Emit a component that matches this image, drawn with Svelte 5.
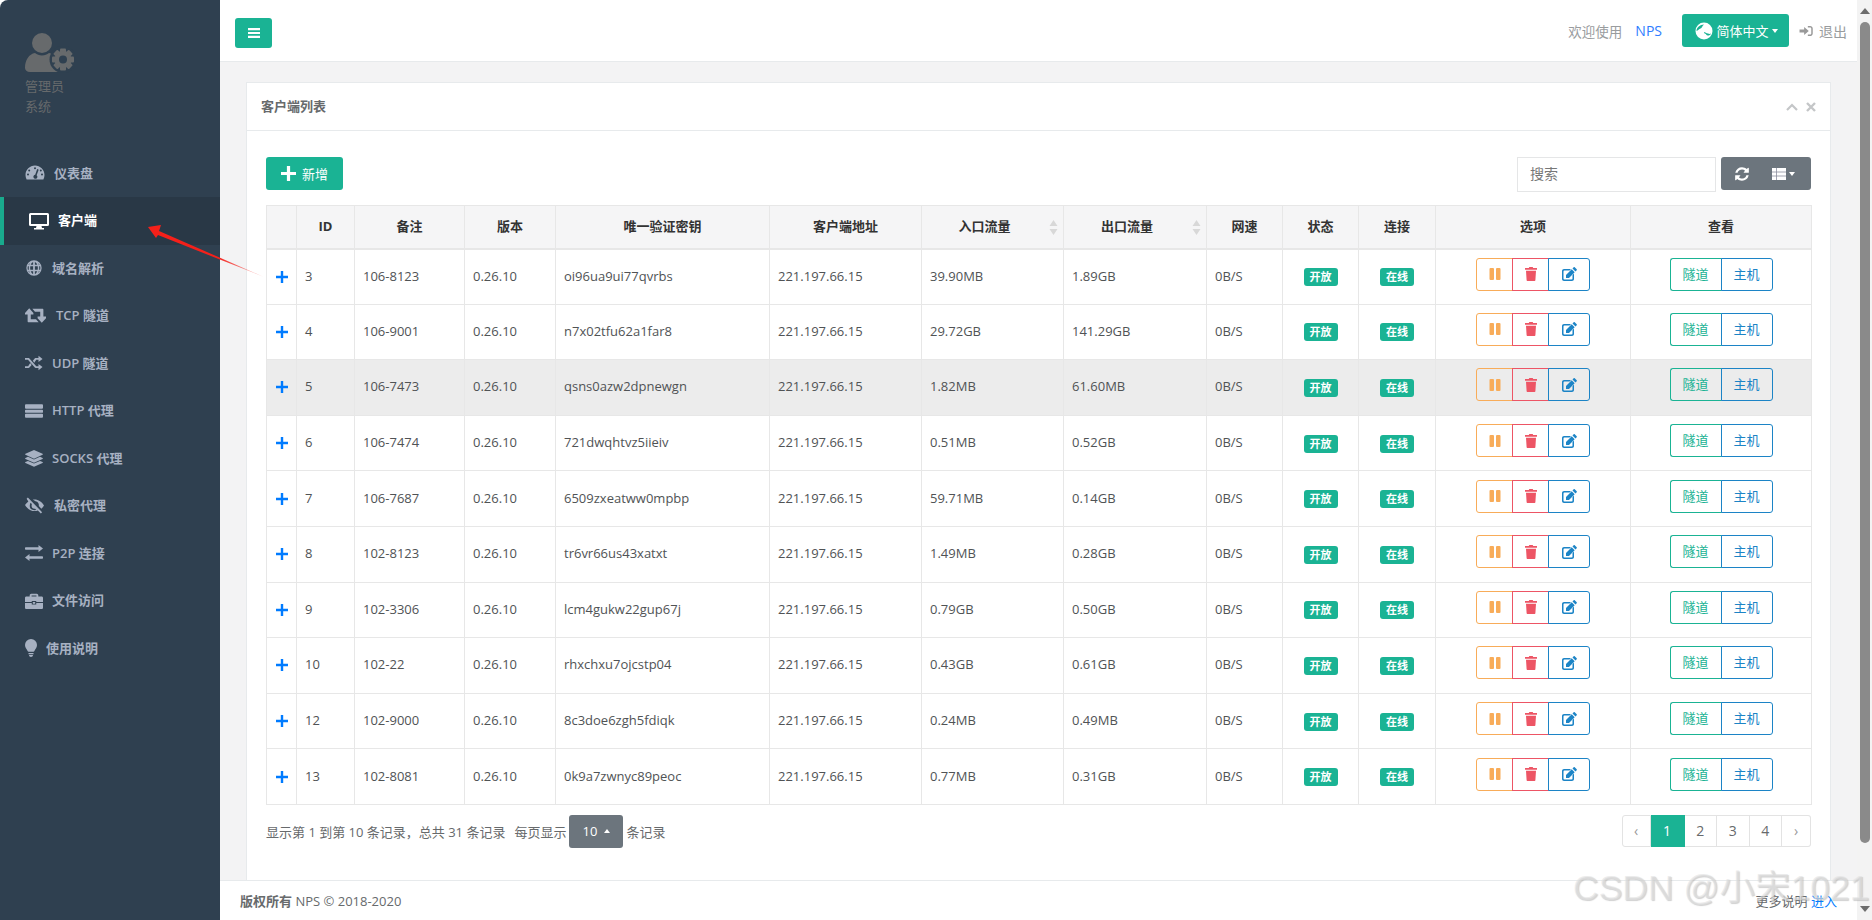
<script>
  const rows = [
    [3, '106-8123', 'oi96ua9ui77qvrbs', '39.90MB', '1.89GB'],
    [4, '106-9001', 'n7x02tfu62a1far8', '29.72GB', '141.29GB'],
    [5, '106-7473', 'qsns0azw2dpnewgn', '1.82MB', '61.60MB'],
    [6, '106-7474', '721dwqhtvz5iieiv', '0.51MB', '0.52GB'],
    [7, '106-7687', '6509zxeatww0mpbp', '59.71MB', '0.14GB'],
    [8, '102-8123', 'tr6vr66us43xatxt', '1.49MB', '0.28GB'],
    [9, '102-3306', 'lcm4gukw22gup67j', '0.79GB', '0.50GB'],
    [10, '102-22', 'rhxchxu7ojcstp04', '0.43GB', '0.61GB'],
    [12, '102-9000', '8c3doe6zgh5fdiqk', '0.24MB', '0.49MB'],
    [13, '102-8081', '0k9a7zwnyc89peoc', '0.77MB', '0.31GB']
  ];
  const menu = [
    { label: '仪表盘', icon: 'gauge', w: 20, gap: 9 },
    { label: '客户端', icon: 'desktop', w: 20, gap: 9, active: true },
    { label: '域名解析', icon: 'globe', w: 18, gap: 9 },
    { label: 'TCP 隧道', icon: 'retweet', w: 21, gap: 10 },
    { label: 'UDP 隧道', icon: 'random', w: 18, gap: 9 },
    { label: 'HTTP 代理', icon: 'server', w: 18, gap: 9 },
    { label: 'SOCKS 代理', icon: 'layers', w: 18, gap: 9 },
    { label: '私密代理', icon: 'eyeoff', w: 19, gap: 10 },
    { label: 'P2P 连接', icon: 'exchange', w: 18, gap: 9 },
    { label: '文件访问', icon: 'case', w: 18, gap: 9 },
    { label: '使用说明', icon: 'bulb', w: 12, gap: 9 }
  ];
  const paths = {
    gauge: 'M10 2.500C4.700 2.500.5 6.800.5 12c0 1.600.4 3.100 1.100 4.500h16.800c.7-1.400 1.100-2.900 1.100-4.500 0-5.200-4.300-9.500-9.500-9.500zM10 4.200a1 1 0 110 2 1 1 0 010-2zM4.200 6.600a1 1 0 110 2 1 1 0 010-2zM3 12.600a1 1 0 110-2 1 1 0 010 2zm10.500-5.400l-1.900 5a2 2 0 11-1.400-.4l1.800-5.200a.8.8 0 011.500.6zm3.500 5.400a1 1 0 110-2 1 1 0 010 2zm-1.200-4a1 1 0 110-2 1 1 0 010 2z',
    desktop: 'M1.500 2h17A1.500 1.500 0 0120 3.500v10a1.500 1.500 0 01-1.500 1.500H12.500l.5 2h2v1.500H5V17h2l.5-2h-6A1.500 1.500 0 010 13.500v-10A1.500 1.500 0 011.500 2zM2 4v9h16V4z',
    globe: 'M10 1.500a8.500 8.500 0 100 17 8.500 8.500 0 000-17zM9 3.300V6.500H6.400C7 4.900 7.900 3.700 9 3.300zm2 0c1.100.4 2 1.600 2.600 3.200H11zM4.700 4.900l.5.300c-.2.400-.4.800-.6 1.300H3.800c.3-.6.600-1.100.9-1.600zm10.600 0c.3.500.6 1 .9 1.600h-.8c-.2-.5-.4-.9-.6-1.300zM3.200 8h1.100c-.1.600-.1 1.300-.1 2s0 1.400.1 2H3.200a7 7 0 010-4zm2.700 0H9v4H5.900a13 13 0 010-4zM11 8h3.100a13 13 0 010 4H11zm4.700 0h1.100a7 7 0 010 4h-1.100c.1-.6.1-1.300.1-2s0-1.400-.1-2zM3.800 13.500h.8c.2.500.4.900.6 1.300l-.5.300c-.3-.5-.6-1-.9-1.600zm2.600 0H9v3.200c-1.100-.4-2-1.600-2.600-3.200zm4.600 0h2.600c-.6 1.600-1.500 2.800-2.600 3.200zm4.400 0h.8c-.3.600-.6 1.100-.9 1.600l-.5-.3c.2-.4.400-.8.600-1.300z',
    retweet: 'M4 3L0 7.500V9h2.500v6.500c0 .6.400 1 1 1H13l-2.500-3H5.500V9H8V7.500zM7 3.500l2.500 3h5V11H12v1.500l4 4.500 4-4.500V11h-2.500V4.500c0-.6-.4-1-1-1z',
    random: 'M15 2l4.500 3.500L15 9V6.500h-2.500L10.300 9.700 8.700 7.500 11 4.800c.3-.2.600-.3.900-.3H15zM0 4.500h4c.3 0 .6.100.9.400L12.500 13.500H15V11l4.500 3.500L15 18v-2.500h-3.200c-.3 0-.6-.1-.9-.4L3.300 6.500H0zM5.800 10.100l1.600 2.200-2.500 2.800c-.2.300-.6.400-.9.400H0v-2h3.500z',
    server: 'M1 2.500h18c.6 0 1 .4 1 1v3c0 .6-.4 1-1 1H1c-.6 0-1-.4-1-1v-3c0-.6.4-1 1-1zM1 8.500h18c.6 0 1 .4 1 1v1.500c0 .6-.4 1-1 1H1c-.6 0-1-.4-1-1V9.500c0-.6.4-1 1-1zM1 13h18c.6 0 1 .4 1 1v2.500c0 .6-.4 1-1 1H1c-.6 0-1-.4-1-1V14c0-.6.4-1 1-1z',
    layers: 'M10 1l9.500 4.300c.5.200.5.900 0 1.100L10 10.700.5 6.400c-.5-.2-.5-.9 0-1.100zM3.300 8.600l6.700 3 6.700-3 2.800 1.300c.5.200.5.900 0 1.100L10 15.300.5 11c-.5-.2-.5-.9 0-1.100zM3.300 13.200l6.700 3 6.700-3 2.800 1.300c.5.200.5.900 0 1.100L10 19.800.5 15.600c-.5-.2-.5-.9 0-1.100z',
    eyeoff: 'M3 1.500l15 15.500-1.300 1.500-3.200-3.300c-1.100.4-2.300.7-3.500.7-4.200 0-7.800-2.500-10-6.300.9-1.500 2.100-2.900 3.500-3.900L1.700 3zM10 3.700c4.200 0 7.800 2.500 10 6.200-.7 1.300-1.700 2.500-2.800 3.400l-2.700-2.800c.3-1.900-.3-3.500-1.800-4.500-.6-.3-1.200-.5-1.700-.5L8.200 3.800c.6-.1 1.200-.1 1.800-.1zM5.800 7l1.400 1.500-.3 1.800c0 1.800 1.400 3.200 3.100 3.200l.6-.1 1.300 1.300-1.900.2c-3 0-5-1.800-5-4.500 0-1 .3-2.100.8-3.400z',
    exchange: 'M15 1l5 4-5 4V6.500H1c-.5 0-1-.5-1-1v-1c0-.5.500-1 1-1h14zM5 11v2.500h14c.5 0 1 .5 1 1v1c0 .5-.5 1-1 1H5V19l-5-4z',
    case: 'M7 2h6c1 0 1.800.8 1.800 1.800V5h3.700C19.300 5 20 5.700 20 6.500V11h-7.500v-1h-5v1H0V6.500C0 5.700.7 5 1.500 5h3.700V3.800C5.200 2.800 6 2 7 2zm.3 1.800V5h5.400V3.800zM0 12.200h7.500v1.800h5v-1.800H20v5.300c0 .8-.7 1.500-1.500 1.500h-17C.7 19 0 18.300 0 17.500zM8.700 11h2.600v2H8.700z',
    bulb: 'M6 0a6 6 0 00-6 6c0 2.800 1.700 3.800 2.600 6 .2.500.5.800 1 .8h4.800c.5 0 .8-.3 1-.8.9-2.200 2.600-3.200 2.600-6a6 6 0 00-6-6zM3.500 14h5v1.200h-5zM4 16h4c0 1.300-.9 2-2 2s-2-.7-2-2z'
  };
  const teeth = [0, 45, 90, 135];
</script>

<div class="shell">
  <aside class="side">
    <div class="profile">
      <svg class="admin" viewBox="0 0 50 40" aria-hidden="true">
        <circle cx="17" cy="10" r="10" fill="#676a6c"/>
        <path d="M0 35c0-8 4-14 10-15 2 1.500 4 2.500 7 2.500s5-1 7-2.500c5 .7 8 4 9 10v9H5c-3 0-5-2-5-4z" fill="#676a6c"/>
        <circle cx="38" cy="26.500" r="13.500" fill="#2f4050"/>
        <g fill="#676a6c">
          {#each teeth as t}
            <rect x="35" y="15.500" width="6" height="22" rx="1" transform="rotate({t} 38 26.500)"/>
          {/each}
          <circle cx="38" cy="26.500" r="8.500"/>
        </g>
        <circle cx="38" cy="26.500" r="4" fill="#2f4050"/>
      </svg>
      <div class="ptext">管理员</div>
      <div class="ptext">系统</div>
    </div>
    <nav class="menu">
      {#each menu as m}
        <div class="item" class:active={m.active} style:gap="{m.gap}px">
          {#if m.icon === 'bulb'}
            <svg class="mi" style:width="{m.w}px" viewBox="0 0 12 18" aria-hidden="true"><path d={paths.bulb}/></svg>
          {:else}
            <svg class="mi" style:width="{m.w}px" style:height="{m.w}px" viewBox="0 0 20 20" aria-hidden="true"><path fill-rule="evenodd" d={paths[m.icon]}/></svg>
          {/if}
          <span>{m.label}</span>
        </div>
      {/each}
    </nav>
  </aside>

  <div class="main">
    <header class="top">
      <button class="burger" aria-label="菜单">
        <svg viewBox="0 0 12 12" width="12" height="12"><path d="M0 1h12v2.200H0zM0 4.900h12v2.200H0zM0 8.800h12V11H0z" fill="#fff"/></svg>
      </button>
      <div class="topright">
        <span class="welcome">欢迎使用</span>
        <span class="nps">NPS</span>
        <button class="lang">
          <svg viewBox="0 0 18 18" width="18" height="18"><circle cx="9" cy="9" r="8.500" fill="#fff"/><path d="M1.500 9c1.500-.5 2.500-2 4-2.500C7 6 7 4 9 2.500c-4 0-7.500 3-7.500 6.500zM9 10c1.500 0 2 1.500 4 1.500 1 .5 2 .5 3 0-.5 1-1 1.500-2 2-1.500 0-3-.5-3-1.500-1 0-2-1-2-2z" fill="#1ab394"/></svg>
          简体中文<i class="caret"></i>
        </button>
        <span class="logout">
          <svg viewBox="0 0 15 13" width="14" height="12"><path d="M9.500 1h2.500c1.500 0 2.800 1.200 2.800 2.800v5.400c0 1.600-1.300 2.800-2.800 2.800H9.500v-1.600H12c.7 0 1.200-.5 1.200-1.200V3.800c0-.7-.5-1.200-1.200-1.200H9.500zM5.500 2.200l5 4.300-5 4.300V8.200H.5V4.800h5z" fill="#999"/></svg>
          退出
        </span>
      </div>
    </header>

    <main class="content">
      <section class="card">
        <div class="cardhead">
          <h5>客户端列表</h5>
          <div class="tools">
            <svg viewBox="0 0 12 8" width="12" height="8"><path d="M1 7l5-5 5 5" fill="none" stroke="#c4c6c8" stroke-width="2.200"/></svg>
            <svg viewBox="0 0 10 10" width="10" height="10"><path d="M1 1l8 8M9 1l-8 8" fill="none" stroke="#c4c6c8" stroke-width="2.400"/></svg>
          </div>
        </div>
        <div class="cardbody">
          <div class="toolbar">
            <button class="add">
              <svg viewBox="0 0 14 14" width="15" height="15"><path d="M5.500 0h3v5.500H14v3H8.500V14h-3V8.500H0v-3h5.500z" fill="#fff"/></svg>
              新增
            </button>
            <div class="tright">
              <div class="search">搜索</div>
              <div class="grp">
                <span class="g1"><svg viewBox="0 0 1792 1792" width="16" height="16"><path fill="#fff" d="M1639 1056q0 5-1 7-64 268-268 434.500t-478 166.500q-146 0-282.500-55t-243.500-157l-129 129q-19 19-45 19t-45-19-19-45v-448q0-26 19-45t45-19h448q26 0 45 19t19 45-19 45l-137 137q71 66 161 102t187 36q134 0 250-65t186-179q11-17 53-117 8-23 30-23h192q13 0 22.500 9.500t9.500 22.500zm25-800v448q0 26-19 45t-45 19h-448q-26 0-45-19t-19-45 19-45l138-138q-148-137-349-137-134 0-250 65t-186 179q-11 17-53 117-8 23-30 23h-199q-13 0-22.500-9.500t-9.500-22.500v-7q65-268 270-434.500t480-166.500q146 0 284 55.500t245 156.500l130-129q19-19 45-19t45 19 19 45z"/></svg></span>
                <span class="g2"><svg viewBox="0 0 14 12" width="14" height="12"><path d="M0 0h14v12H0z" fill="#fff"/><path d="M4.500 0v12M0 4h14M0 8h14" stroke="#8d8fa0" stroke-width=".8"/></svg><i class="caret"></i></span>
              </div>
            </div>
          </div>

          <table>
            <colgroup>
              <col style="width:30px"/><col style="width:58px"/><col style="width:110px"/><col style="width:91px"/><col style="width:214px"/><col style="width:152px"/><col style="width:142px"/><col style="width:143px"/><col style="width:76px"/><col style="width:76px"/><col style="width:77px"/><col style="width:195px"/><col style="width:181px"/>
            </colgroup>
            <thead>
              <tr>
                <th></th><th>ID</th><th>备注</th><th>版本</th><th>唯一验证密钥</th><th>客户端地址</th>
                <th class="sort">入口流量<svg class="sorter" viewBox="0 0 8 15" width="9" height="15"><path d="M4 0l4 6H0zM4 15L0 9h8z" fill="#d8d8d8"/></svg></th>
                <th class="sort">出口流量<svg class="sorter" viewBox="0 0 8 15" width="9" height="15"><path d="M4 0l4 6H0zM4 15L0 9h8z" fill="#d8d8d8"/></svg></th>
                <th>网速</th><th>状态</th><th>连接</th><th>选项</th><th>查看</th>
              </tr>
            </thead>
            <tbody>
              {#each rows as r, i}
                <tr class:hover={i === 2}>
                  <td class="plus"><svg viewBox="0 0 12 12" width="12" height="12"><path d="M4.800 0h2.400v4.800H12v2.400H7.200V12H4.800V7.200H0V4.800h4.800z" fill="#007bff"/></svg></td>
                  <td>{r[0]}</td>
                  <td>{r[1]}</td>
                  <td>0.26.10</td>
                  <td>{r[2]}</td>
                  <td>221.197.66.15</td>
                  <td>{r[3]}</td>
                  <td>{r[4]}</td>
                  <td>0B/S</td>
                  <td class="c"><span class="badge">开放</span></td>
                  <td class="c"><span class="badge">在线</span></td>
                  <td class="c">
                    <div class="bg">
                      <span class="b warn"><svg viewBox="0 0 12 12" width="12" height="12"><rect x="0.500" y="0" width="4.500" height="12" rx="1" fill="#f8ac59"/><rect x="7" y="0" width="4.500" height="12" rx="1" fill="#f8ac59"/></svg></span>
                      <span class="b dang"><svg viewBox="0 0 12 14" width="12" height="14"><path d="M4.300 0h3.400l.5 1H12v1.700H0V1h3.800zM1 3.800h10l-.6 9.200c0 .6-.5 1-1 1H2.600c-.5 0-1-.4-1-1z" fill="#ed5565"/></svg></span>
                      <span class="b info"><svg viewBox="0 0 15 14" width="15" height="14"><path d="M2 2h7L7.600 3.500H2.400c-.5 0-.9.400-.9.900v7.200c0 .5.400.9.900.9h7.200c.5 0 .9-.4.900-.9V8L12 6.500V12c0 1.100-.9 2-2 2H2c-1.100 0-2-.9-2-2V4c0-1.100.9-2 2-2z" fill="#1c84c6"/><path d="M12.700.3l2 2c.3.300.3.700 0 1L13.500 4.500l-3-3L11.700.3c.3-.3.700-.3 1 0zM9.700 2.300l3 3L7 11H4V8z" fill="#1c84c6"/></svg></span>
                    </div>
                  </td>
                  <td class="c">
                    <div class="bg">
                      <span class="t prim">隧道</span><span class="t succ">主机</span>
                    </div>
                  </td>
                </tr>
              {/each}
            </tbody>
          </table>

          <div class="pager">
            <div class="pinfo">
              <span>显示第 1 到第 10 条记录，总共 31 条记录</span>
              <span class="per">每页显示</span>
              <span class="size">10<i class="caret up"></i></span>
              <span>条记录</span>
            </div>
            <div class="pages">
              <span class="pg arrow first">‹</span><span class="pg on">1</span><span class="pg">2</span><span class="pg">3</span><span class="pg">4</span><span class="pg arrow last">›</span>
            </div>
          </div>
        </div>
      </section>
    </main>

    <footer class="foot">
      <div><strong>版权所有</strong> NPS © 2018-2020</div>
      <div>更多说明 <span class="link">进入</span></div>
    </footer>
  </div>

  <div class="scroll" aria-hidden="true">
    <i class="tri tup"></i>
    <div class="track"><div class="thumb"></div></div>
    <i class="tri tdown"></i>
  </div>

  <svg class="arrow-mark" viewBox="0 0 130 65" width="130" height="65" aria-hidden="true">
    <defs>
      <linearGradient id="fade" x1="0" y1="0" x2="1" y2="0">
        <stop offset="0" stop-color="#f5201a"/>
        <stop offset="0.6" stop-color="#f5201a"/>
        <stop offset="1" stop-color="#f5201a" stop-opacity=".15"/>
      </linearGradient>
    </defs>
    <path d="M6 7L19 5 17 11 122 57 16 15 14 18z" fill="url(#fade)"/>
  </svg>
  <div class="mark">CSDN @小宋1021</div>
</div>

<style>
  :global(body) {
    margin: 0;
    font-family: "Open Sans", "Noto Sans CJK SC", sans-serif;
    font-size: 13px;
    color: #676a6c;
    overflow: hidden;
  }
  .shell { display: flex; width: 1872px; height: 920px; position: relative; overflow: hidden; }
  .side { width: 220px; flex: none; background: #2f4050; border-top-left-radius: 8px; }
  .profile { padding: 33px 25px 0; height: 116.500px; }
  .admin { display: block; width: 50px; height: 40px; margin-bottom: 4px; }
  .ptext { font-size: 13px; line-height: 19.500px; color: #676a6c; }
  .item { height: 47.500px; display: flex; align-items: center; padding-left: 25px; color: #a7b1c2; font-weight: 600; font-size: 13px; }
  .item span { padding-bottom: 2px; }
  .item.active { background: #293846; color: #fff; border-left: 4px solid #19aa8d; font-weight: 700; }
  .mi { width: 18px; height: 18px; fill: #a7b1c2; flex: none; }
  .active .mi { fill: #fff; }
  .main { width: 1637px; flex: none; display: flex; flex-direction: column; background: #f3f3f4; }
  .top { height: 62px; box-sizing: border-box; background: #fff; border-bottom: 1px solid #e7eaec; display: flex; align-items: center; justify-content: space-between; padding: 0 10px 0 15px; flex: none; }
  .burger { width: 37px; height: 30px; border: 0; padding: 0; background: #1ab394; border-radius: 3px; display: flex; align-items: center; justify-content: center; margin-top: 5px; }
  .topright { display: flex; align-items: center; color: #999c9e; font-size: 13.500px; }
  .nps { color: #2f7dff; margin-left: 13px; font-size: 14px; }
  .lang { height: 33px; width: 107px; margin-left: 20px; background: #1ab394; border: 0; border-radius: 3px; color: #fff; font: inherit; font-size: 13px; display: flex; align-items: center; justify-content: center; gap: 3px; padding: 0 0 0 2px; }
  .logout { margin-left: 10px; display: flex; align-items: center; gap: 6px; font-size: 14px; }
  .caret { display: inline-block; border-top: 4px solid currentColor; border-left: 3px solid transparent; border-right: 3px solid transparent; margin-left: 0; vertical-align: middle; }
  .caret.up { border-top: 0; border-bottom: 4px solid currentColor; margin-left: 7px; }
  .content { flex: 1; padding: 20px 26px 0 26px; min-height: 0; }
  .card { background: #fff; border: 1px solid #e7eaec; border-bottom: 0; box-sizing: border-box; height: 799px; }
  .cardhead { height: 47px; border-bottom: 1px solid #e7eaec; display: flex; align-items: center; justify-content: space-between; padding: 0 14px 0 14px; }
  h5 { margin: 0 0 2px; font-size: 13px; font-weight: 600; color: #676a6c; }
  .tools { display: flex; align-items: center; gap: 8px; }
  .cardbody { padding: 26px 19px 0 19px; }
  .toolbar { display: flex; justify-content: space-between; align-items: flex-start; height: 48px; }
  .add { width: 77px; height: 33px; border: 0; padding: 0; background: #1ab394; color: #fff; border-radius: 3px; font: inherit; display: flex; align-items: center; justify-content: center; gap: 6px; }
  .tright { display: flex; gap: 5px; }
  .search { width: 199px; height: 35px; box-sizing: border-box; border: 1px solid #e5e6e7; padding: 0 12px; line-height: 32px; color: #777; font-size: 14px; }
  .grp { display: flex; width: 90px; height: 33px; background: #6c757d; border-radius: 3px; align-items: center; color: #fff; }
  .g1 { width: 40px; display: flex; justify-content: center; padding-left: 2px; box-sizing: border-box; }
  .g2 { display: flex; align-items: center; gap: 3px; padding-left: 11px; }
  table { border-collapse: collapse; table-layout: fixed; width: 1545px; border: 1px solid #e7e7e7; color: #505355; }
  th, td { border: 1px solid #e7e7e7; padding: 0 8px 2px; font-size: 13px; text-align: left; box-sizing: border-box; white-space: nowrap; }
  th { height: 43px; background: #f5f5f6; text-align: center; color: #333; font-weight: 700; position: relative; border-bottom: 2px solid #e7e7e7; }
  th.sort { padding-right: 24px; }
  td { height: 55.600px; }
  .hover td { background: #ececec; }
  td.plus { text-align: center; padding: 0; }
  td.plus svg { display: block; margin: 0 auto; }
  td.c { text-align: center; padding: 0; }
  .sorter { position: absolute; right: 5px; top: 14px; }
  .badge { display: inline-block; background: #1ab394; color: #fff; font-size: 11px; font-weight: 700; line-height: 18px; width: 34px; border-radius: 3px; text-align: center; }
  .bg { display: inline-flex; vertical-align: middle; margin-bottom: 5px; }
  .b, .t { height: 33px; box-sizing: border-box; border: 1px solid; display: flex; align-items: center; justify-content: center; margin-left: -1px; }
  .b { width: 37px; }
  .warn { border-color: #f8ac59; border-radius: 3px 0 0 3px; margin-left: 0; }
  .dang { border-color: #ed5565; }
  .info { width: 42px; border-color: #1c84c6; border-radius: 0 3px 3px 0; }
  .t { width: 52px; font-size: 13px; padding-bottom: 2px; }
  .prim { color: #1ab394; border-color: #1ab394; border-right-color: #1c84c6; border-radius: 3px 0 0 3px; margin-left: 0; }
  .succ { color: #1c84c6; border-color: #1c84c6; border-radius: 0 3px 3px 0; }
  .pager { display: flex; justify-content: space-between; align-items: flex-start; margin-top: 10px; width: 1545px; }
  .pinfo { display: flex; align-items: center; height: 33px; color: #676a6c; font-size: 13px; }
  .per { margin-left: 9px; }
  .size { width: 54px; height: 33px; margin: 0 3px; background: #6c757d; color: #fff; border-radius: 3px; display: flex; align-items: center; justify-content: center; }
  .pages { display: flex; height: 32px; }
  .pg { width: 32.500px; box-sizing: border-box; border: 1px solid #e3e3e3; border-left: 0; display: flex; align-items: center; justify-content: center; color: #676a6c; font-size: 14px; }
  .pg.on { background: #1ab394; border-color: #1ab394; color: #fff; width: 34px; }
  .arrow { color: #999; width: 29px; }
  .first { border-left: 1px solid #e3e3e3; border-radius: 3px 0 0 3px; }
  .last { border-radius: 0 3px 3px 0; }
  .foot { height: 40px; flex: none; box-sizing: border-box; background: #fff; border-top: 1px solid #e7eaec; display: flex; align-items: center; justify-content: space-between; padding: 0 20px; font-size: 13px; color: #676a6c; }
  .link { color: #007bff; }
  .scroll { width: 15px; flex: none; background: #f3f3f3; display: flex; flex-direction: column; align-items: center; }
  .track { flex: 1; width: 100%; padding-top: 2px; box-sizing: border-box; }
  .thumb { width: 10px; margin-left: 3px; height: 821px; background: #8a8a8a; border-radius: 5px; }
  .tri { width: 0; height: 0; border-left: 5px solid transparent; border-right: 5px solid transparent; margin: 8px 0 6px; }
  .tup { border-bottom: 6px solid #6d6d6d; }
  .tdown { border-top: 6px solid #6d6d6d; margin: 6px 0 8px; }
  .arrow-mark { position: absolute; left: 142px; top: 220px; }
  .mark { position: absolute; left: 1573px; top: 866px; font-family: "Liberation Sans", "Noto Sans CJK SC", sans-serif; font-size: 35.500px; line-height: 44px; color: rgba(226,226,226,.6); text-shadow: 1px 1px 1px rgba(150,150,150,.45); white-space: nowrap; }
</style>
